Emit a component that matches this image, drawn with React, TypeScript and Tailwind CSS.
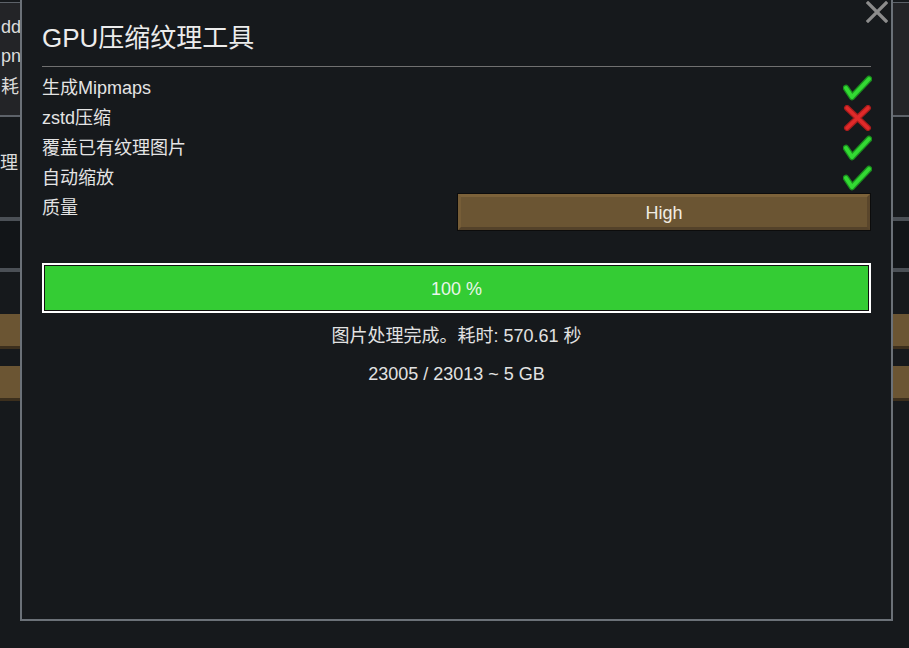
import React from "react";

function CheckMark() {
  return (
    <svg width="29" height="26" viewBox="0 0 29 26" className="block">
      <path
        d="M3 13 L9 22 L26 4"
        fill="none"
        stroke="#1a8f1e"
        strokeWidth="6.5"
        strokeLinecap="round"
        strokeLinejoin="round"
      />
      <path
        d="M3 13 L9 22 L26 4"
        fill="none"
        stroke="#33d933"
        strokeWidth="4"
        strokeLinecap="round"
        strokeLinejoin="round"
      />
    </svg>
  );
}

function CrossMark() {
  return (
    <svg width="29" height="26" viewBox="0 0 29 26" className="block">
      <path
        d="M4 3 L25 23 M25 3 L4 23"
        fill="none"
        stroke="#a81c1c"
        strokeWidth="6"
        strokeLinecap="round"
      />
      <path
        d="M4 3 L25 23 M25 3 L4 23"
        fill="none"
        stroke="#e02a2a"
        strokeWidth="3.6"
        strokeLinecap="round"
      />
    </svg>
  );
}

function ToggleRow(props: { label: string; on: boolean }) {
  return (
    <div className="flex h-[30px] items-center justify-between">
      <span>{props.label}</span>
      <span className="-mr-[1px]">{props.on ? <CheckMark /> : <CrossMark />}</span>
    </div>
  );
}

function BrownBar(props: { className?: string; children?: React.ReactNode }) {
  return (
    <div className={"bg-[#0c0c0c] p-[1px] " + (props.className ?? "")}>
      <div className="flex h-full items-center justify-center border-[3px] border-t-[#7c623a] border-l-[#765d37] border-b-[#54422a] border-r-[#5a462b] bg-[#6b5533] pt-[2px] text-[#f1ece2]">
        {props.children}
      </div>
    </div>
  );
}

function BackgroundWindow() {
  return (
    <div className="flex flex-col pt-[2px] text-[18px] text-[#dcdcdc]">
      <div className="h-[1px] bg-[#5d6269]" />
      <div className="flex h-[112px] flex-col bg-[#232427] pl-[1px] pt-[10px] leading-[29px]">
        <span>dds</span>
        <span>png</span>
        <span className="mt-[2px]">耗时</span>
      </div>
      <div className="h-[2px] bg-[#5d6269]" />
      <div className="flex h-[100px] items-center">
        <span className="mt-[-8px]">理</span>
      </div>
      <div className="h-[4px] bg-[#4b5056]" />
      <div className="h-[47px] bg-[#121518]" />
      <div className="h-[4px] bg-[#4b5056]" />
      <div className="h-[42px]" />
      <div className="h-[35px] border-b-[3px] border-[#3c2f1d] bg-[#6b5533]" />
      <div className="h-[17px]" />
      <div className="h-[35px] border-b-[3px] border-[#3c2f1d] bg-[#6b5533]" />
    </div>
  );
}

export default function App() {
  return (
    <div className="relative h-[648px] w-[909px] overflow-hidden bg-[#16191c] font-['Liberation_Sans','Noto_Sans_CJK_SC',sans-serif] text-[#e2e2e2]">
      <BackgroundWindow />

      <div className="absolute left-[20px] top-0 flex h-[621px] w-[873px] flex-col border-2 border-t-0 border-[#6b7178] bg-[#16191c] px-5">
        <h1 className="mt-[21px] text-[26px] leading-[34px] text-[#ececec]">GPU压缩纹理工具</h1>
        <div className="mt-[11px] h-[1px] bg-[#707070]" />

        <div className="mt-[6px] flex flex-col text-[18px] text-[#e4e4e4]">
          <ToggleRow label="生成Mipmaps" on />
          <ToggleRow label="zstd压缩" on={false} />
          <ToggleRow label="覆盖已有纹理图片" on />
          <ToggleRow label="自动缩放" on />
          <div className="flex items-start justify-between">
            <span className="flex h-[30px] items-center">质量</span>
            <BrownBar className="h-[38px] w-[414px]">
              <span className="text-[18px]">High</span>
            </BrownBar>
          </div>
        </div>

        <div className="mt-[32px] h-[50px] border-2 border-white bg-[#101010] p-[1px]">
          <div className="flex h-full items-center justify-center bg-[#34cc34] pt-[3px] text-[18px] text-[#eaf6ea]">
            100 %
          </div>
        </div>

        <div className="mt-[11px] flex flex-col items-center text-[18px] leading-[24px] text-[#e2e2e2]">
          <span>图片处理完成。耗时: 570.61 秒</span>
          <span className="mt-[14px]">23005 / 23013 ~ 5 GB</span>
        </div>

        <button className="absolute right-[3px] top-[1px] flex h-[22px] w-[22px] items-center justify-center">
          <svg width="22" height="22" viewBox="0 0 22 22">
            <path d="M2 2 L20 20 M20 2 L2 20" stroke="#8c8c8c" strokeWidth="3.2" strokeLinecap="square" />
          </svg>
        </button>
      </div>
    </div>
  );
}
